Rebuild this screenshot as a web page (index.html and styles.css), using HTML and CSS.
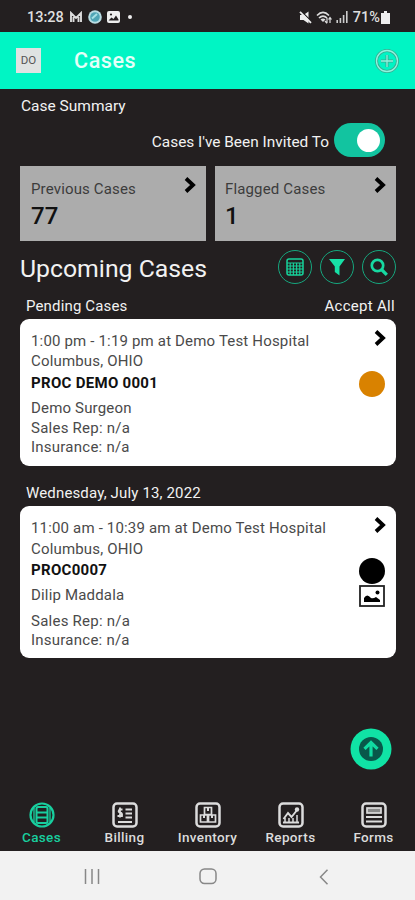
FILE: index.html
```html
<!DOCTYPE html>
<html lang="en">
<head>
  <meta charset="UTF-8" />
  <meta name="viewport" content="width=device-width, initial-scale=1.0" />
  <title>Cases</title>
  <link rel="stylesheet" href="styles.css">
</head>
<body>
  <div class="status-bar">
    <span class="clock">13:28</span>
    <svg width="14" height="12" viewBox="0 0 14 12"><path d="M2 11V2l5 5 5-5v9M4.500 11V6M9.500 11V6" fill="none" stroke="#ddd" stroke-width="1.900"/></svg>
    <svg width="14" height="14" viewBox="0 0 14 14"><circle cx="7" cy="7" r="6.800" fill="#b9dce2"/><circle cx="7" cy="7" r="4.800" fill="#4fa5b5"/><path d="M4 8.500L9 4" fill="none" stroke="#a5e0e5" stroke-width="2"/></svg>
    <svg width="13" height="12" viewBox="0 0 13 12"><rect width="13" height="12" rx="2" fill="#eee"/><path d="M1.500 9.500l3-3 2 1.500 2.500-3.500 2.500 4v1z" fill="#231f20"/><circle cx="4" cy="3.500" r="1.100" fill="#231f20"/></svg>
    <span class="dot"></span>
    <span class="status-right">
      <svg width="13" height="13" viewBox="0 0 13 13"><path d="M1 4h3.500L9.500 .5v12L4.500 9H1z" fill="#eee"/><path d="M2.500 .5l10 10" stroke="#231f20" stroke-width="1.200"/><path d="M1 .8l11 11" stroke="#eee" stroke-width="1.700"/></svg>
      <svg width="16" height="13" viewBox="0 0 16 13"><path d="M1 4.500Q7 -1.500 13 4.500M3 7q4-4 8 0" fill="none" stroke="#ddd" stroke-width="1.700"/><path d="M4.500 8.500q2.500-2 5 0L7 11z" fill="#ddd"/><path d="M11 7v5M9 10l2 2.300M14 12V7M12.500 8.500L14 6.500l1.500 2" fill="none" stroke="#ddd" stroke-width="1.200"/></svg>
      <svg width="12" height="12" viewBox="0 0 12 12"><path d="M1.200 12V9M4.400 12V7M7.600 12V4M10.800 12V0" stroke="#ccc" stroke-width="1.600"/></svg>
      <span class="battery-text">71%</span>
      <svg width="9" height="13" viewBox="0 0 9 13"><path d="M3 0h3v2h3v11H0V2h3z" fill="#eee"/></svg>
    </span>
  </div>

  <header class="app-bar">
    <span class="avatar">DO</span>
    <h1>Cases</h1>
    <svg class="add" width="26" height="26" viewBox="0 0 26 26"><g fill="none" stroke="#39a98f" stroke-width="3"><circle cx="13" cy="13" r="10.500"/><path d="M13 7v12M7 13h12"/></g><g fill="none" stroke="#8df5df" stroke-width="1.300"><circle cx="13" cy="13" r="10.500"/><path d="M13 7v12M7 13h12"/></g></svg>
  </header>

  <main>
    <div class="summary-title">Case Summary</div>
    <div class="invited">
      <span>Cases I've Been Invited To</span>
      <span class="toggle"></span>
    </div>

    <div class="tiles">
      <div class="tile">
        <div class="tile-label">Previous Cases</div>
        <div class="tile-count">77</div>
        <svg class="chevron" width="12" height="16" viewBox="0 0 12 16"><path d="M2 1.500L9 8l-7 6.500"/></svg>
      </div>
      <div class="tile">
        <div class="tile-label">Flagged Cases</div>
        <div class="tile-count">1</div>
        <svg class="chevron" width="12" height="16" viewBox="0 0 12 16"><path d="M2 1.500L9 8l-7 6.500"/></svg>
      </div>
    </div>

    <div class="upcoming">
      <h2>Upcoming Cases</h2>
      <span class="round"><svg width="18" height="18" viewBox="0 0 18 18"><rect x="1" y="1" width="16" height="16" rx="2" fill="none" stroke="#17d39b" stroke-width="1.500"/><path d="M1 5h16M1 8h16M1 11h16M1 14h16M4.200 5v12M7.400 5v12M10.600 5v12M13.800 5v12" stroke="#17d39b" stroke-width="1.100"/></svg></span>
      <span class="round"><svg width="18" height="18" viewBox="0 0 18 18"><path d="M1 1h16l-5.500 7.500V17.500L6.800 14V8.500z" fill="#17e0a6"/></svg></span>
      <span class="round"><svg width="18" height="18" viewBox="0 0 18 18"><circle cx="7.500" cy="7.500" r="5.700" fill="none" stroke="#17d9a1" stroke-width="2.700"/><path d="M11.500 11.500l5.300 5.300" stroke="#17d9a1" stroke-width="3.200"/></svg></span>
    </div>

    <div class="group-head">
      <span class="pending">Pending Cases</span>
      <span class="accept">Accept All</span>
    </div>
    <div class="card">
      <div class="info">
        <div class="time">1:00 pm - 1:19 pm at Demo Test Hospital</div>
        <div class="place">Columbus, OHIO</div>
        <div class="proc">PROC DEMO 0001</div>
        <div class="surgeon">Demo Surgeon</div>
        <div class="rep">Sales Rep: n/a</div>
        <div class="insurance">Insurance: n/a</div>
      </div>
      <div class="marks">
        <svg class="chevron" width="12" height="16" viewBox="0 0 12 16"><path d="M2 1.500L9 8l-7 6.500"/></svg>
        <span class="state orange"></span>
      </div>
    </div>

    <div class="group-head second">
      <span class="date">Wednesday, July 13, 2022</span>
    </div>
    <div class="card tall">
      <div class="info">
        <div class="time">11:00 am - 10:39 am at Demo Test Hospital</div>
        <div class="place">Columbus, OHIO</div>
        <div class="proc">PROC0007</div>
        <div class="surgeon">Dilip Maddala</div>
        <div class="rep">Sales Rep: n/a</div>
        <div class="insurance">Insurance: n/a</div>
      </div>
      <div class="marks">
        <svg class="chevron" width="12" height="16" viewBox="0 0 12 16"><path d="M2 1.500L9 8l-7 6.500"/></svg>
        <span class="state black"></span>
        <svg class="photo" width="26" height="22" viewBox="0 0 26 22"><rect x="1" y="1" width="24" height="20" fill="#fff" stroke="#222" stroke-width="1.800"/><path d="M5 17v-4q3-5 7 0 2 1 5-1l4 3v2z"/><circle cx="18.500" cy="7.500" r="2"/></svg>
      </div>
    </div>
  </main>

  <div class="to-top">
    <svg width="42" height="42" viewBox="0 0 42 42"><circle cx="21" cy="21" r="20.500" fill="#10e3a5"/><circle cx="21" cy="21" r="12" fill="#08584a"/><path d="M21 28.500V15M14.500 20.800L21 14.500l6.500 6.300" fill="none" stroke="#10dba2" stroke-width="3.200"/></svg>
  </div>

  <nav class="tabs">
    <div class="tab active">
      <svg width="26" height="26" viewBox="0 0 26 26" fill="none" stroke="currentColor"><circle cx="13" cy="13" r="11.500" stroke-width="2.200"/><rect x="7.500" y="5" width="11" height="16" rx="1.500" stroke-width="2"/><path d="M7 10.500h12M7 15.500h12" stroke-width="2"/><path d="M5 6v14M21 6v14" stroke-width="1.300"/></svg>
      <span>Cases</span>
    </div>
    <div class="tab">
      <svg width="26" height="26" viewBox="0 0 26 26" fill="none" stroke="currentColor"><rect x="1.500" y="1.500" width="23" height="23" rx="3.500" stroke-width="2.500"/><path d="M10.500 7.500H7.500Q5.500 10 8 10.500T10 14H5.500M8 5.500v10M13.500 7.500H20M13.500 11.500H20M13.500 15.500H20M6 20h14" stroke-width="1.800"/></svg>
      <span>Billing</span>
    </div>
    <div class="tab">
      <svg width="26" height="26" viewBox="0 0 26 26" fill="none" stroke="currentColor"><rect x="1.500" y="1.500" width="23" height="23" rx="3.500" stroke-width="2.500"/><path d="M9.500 5.500h7v7h-7zM5.500 13h7v7h-7zM13.500 13h7v7h-7z" stroke-width="1.700"/><path d="M13 5v4M9 13v3M17 13v3" stroke-width="2"/></svg>
      <span>Inventory</span>
    </div>
    <div class="tab">
      <svg width="26" height="26" viewBox="0 0 26 26" fill="none" stroke="currentColor"><rect x="1.500" y="1.500" width="23" height="23" rx="3.500" stroke-width="2.500"/><path d="M5.500 17l4.500-6 3.500 4L19.500 7.500M5 20.500h16" stroke-width="1.900"/><path d="M7 20v-4M11 20v-4M15 20v-4M19 20v-7" stroke-width="1.500"/><circle cx="19" cy="7.500" r="2.200" fill="currentColor" stroke="none"/></svg>
      <span>Reports</span>
    </div>
    <div class="tab">
      <svg width="26" height="26" viewBox="0 0 26 26" fill="none" stroke="currentColor"><rect x="1.500" y="1.500" width="23" height="23" rx="3.500" stroke-width="2.500"/><rect x="6" y="6" width="14" height="5" fill="#888" stroke-width="1.700"/><path d="M5 15h16M5 19.500h16" stroke-width="2"/></svg>
      <span>Forms</span>
    </div>
  </nav>

  <div class="system-nav">
    <svg width="16" height="16" viewBox="0 0 16 16"><path d="M1.500 0v15M8 0v15M14.500 0v15"/></svg>
    <svg width="18" height="17" viewBox="0 0 18 17"><rect x="1" y="1" width="16" height="14.500" rx="4.500"/></svg>
    <svg width="10" height="16" viewBox="0 0 10 16"><path d="M8.500 .7L1.500 8l7 7.300"/></svg>
  </div>
</body>
</html>
```
FILE: styles.css
```css
* { box-sizing: border-box; }
body {
  margin: 0;
  height: 900px;
  display: flex;
  flex-direction: column;
  overflow: hidden;
  font-family: Roboto, sans-serif;
  background: #231f20;
  color: #f2f2f2;
}
svg { display: block; flex: none; }
h1, h2 { margin: 0; }
span, div { white-space: nowrap; }

.status-bar {
  height: 32px;
  padding: 2px 25px 0 27px;
  display: flex;
  align-items: center;
  gap: 5px;
  font-size: 14.5px;
  font-weight: 500;
  color: #dedede;
}
.clock { width: 37px; }
.dot {
  width: 4px;
  height: 4px;
  margin-left: 3px;
  border-radius: 50%;
  background: #eee;
}
.status-right {
  margin-left: auto;
  display: flex;
  align-items: center;
  gap: 4px;
}
.battery-text { margin: 0 -3px 0 1px; }

.app-bar {
  height: 57px;
  padding: 0 15px 0 16px;
  display: flex;
  align-items: center;
  background: #00f5c4;
}
.avatar {
  width: 25px;
  height: 25px;
  background: #dfe3e2;
  color: #555;
  font-size: 11.5px;
  line-height: 25px;
  text-align: center;
}
.app-bar h1 {
  margin-left: 33px;
  padding-top: 1px;
  font-size: 21.5px;
  font-weight: 500;
  line-height: 30px;
  letter-spacing: 0.6px;
  color: #e4fff8;
}
.add { margin-left: auto; }

main {
  flex: 1;
  padding: 7px 19px 0 20px;
}
.summary-title {
  padding-left: 1px;
  font-size: 15.5px;
  line-height: 20px;
}
.invited {
  height: 34px;
  margin-top: 7px;
  padding: 0 11px 0 0;
  display: flex;
  align-items: center;
  justify-content: flex-end;
  gap: 5px;
  font-size: 15.4px;
}
.invited span:first-child { padding-top: 3px; }
.toggle {
  width: 51px;
  height: 34px;
  padding: 6px 5px;
  border-radius: 17px;
  background: #12c4a0;
}
.toggle::after {
  content: "";
  display: block;
  width: 23px;
  height: 23px;
  margin-left: auto;
  border-radius: 50%;
  background: #fff;
}

.tiles {
  display: grid;
  grid-template-columns: 186px 181px;
  gap: 9px;
  margin-top: 9px;
}
.tile {
  height: 75px;
  padding: 12px 10px 12px 11px;
  display: grid;
  grid-template-columns: 1fr auto;
  grid-template-rows: 20px 34px;
  background: #acacac;
  color: #111;
}
.tile:last-child { padding-left: 10px; }
.tile .chevron { grid-area: 1 / 2; margin-top: -1px; }
.tile-label {
  padding-top: 1px;
  font-size: 15px;
  line-height: 20px;
  letter-spacing: 0.15px;
  color: #3c3c3c;
}
.tile-count {
  padding-top: 1px;
  font-size: 24px;
  font-weight: 500;
  line-height: 34px;
}
.chevron path {
  fill: none;
  stroke: #000;
  stroke-width: 3.8;
}

.upcoming {
  height: 34px;
  margin-top: 9px;
  display: flex;
  align-items: center;
  gap: 8px;
}
.upcoming h2 {
  flex: 1;
  padding-top: 3px;
  font-size: 24.8px;
  font-weight: 400;
  line-height: 30px;
}
.round {
  width: 34px;
  height: 34px;
  display: flex;
  align-items: center;
  justify-content: center;
  border: 1.5px solid #16a67e;
  border-radius: 50%;
}

.group-head {
  height: 20px;
  margin-top: 11px;
  padding: 1px 1px 0 6px;
  display: flex;
  justify-content: space-between;
  font-size: 15px;
  line-height: 20px;
  letter-spacing: 0.15px;
}
.group-head.second { margin-top: 16px; }
.accept { letter-spacing: 0.3px; }

.card {
  height: 147px;
  margin-top: 4px;
  padding: 12px 10px 0 11px;
  display: flex;
  justify-content: space-between;
  border-radius: 9px;
  background: #fff;
  color: #4a4a4a;
  font-size: 15px;
  line-height: 20px;
  letter-spacing: 0.17px;
}
.card.tall { height: 152px; }
.proc {
  margin: 1px 0 6px;
  padding-top: 1px;
  height: 20px;
  font-weight: 700;
  font-size: 15px;
  letter-spacing: 0.3px;
  color: #111;
}
.insurance { line-height: 18px; }
.rep, .insurance { letter-spacing: 0.24px; }
.tall .place { margin-top: 1px; }
.tall .surgeon { margin-top: -1px; }
.tall .proc { margin-top: 0; margin-bottom: 7px; }
.tall .rep { margin-top: 6px; }
.marks {
  display: flex;
  flex-direction: column;
  align-items: flex-end;
}
.marks .chevron { margin-top: -1px; }
.state {
  width: 26px;
  height: 26px;
  margin: 25px 1px 0 0;
  border-radius: 50%;
}
.orange { background: #d98200; }
.black { background: #000; }
.photo { margin: 1px 1px 0 0; }

/* floats above the page, bottom right */
.to-top {
  position: absolute;
  left: 350px;
  top: 728px;
}

.tabs {
  height: 51px;
  display: grid;
  grid-template-columns: repeat(5, 83px);
}
.tab {
  display: flex;
  flex-direction: column;
  align-items: center;
  padding-top: 2px;
  color: #dcdcdc;
  font-size: 13.5px;
  font-weight: 500;
  line-height: 18px;
  letter-spacing: 0.35px;
}
.tab.active { color: #18cf9f; }

.system-nav {
  height: 49px;
  padding: 2px 86px 0 84px;
  display: flex;
  align-items: center;
  justify-content: space-between;
  background: #f2f2f2;
}
.system-nav svg {
  fill: none;
  stroke: #888;
  stroke-width: 1.5;
}
.system-nav svg:nth-child(2) { margin-right: 3px; }
```
